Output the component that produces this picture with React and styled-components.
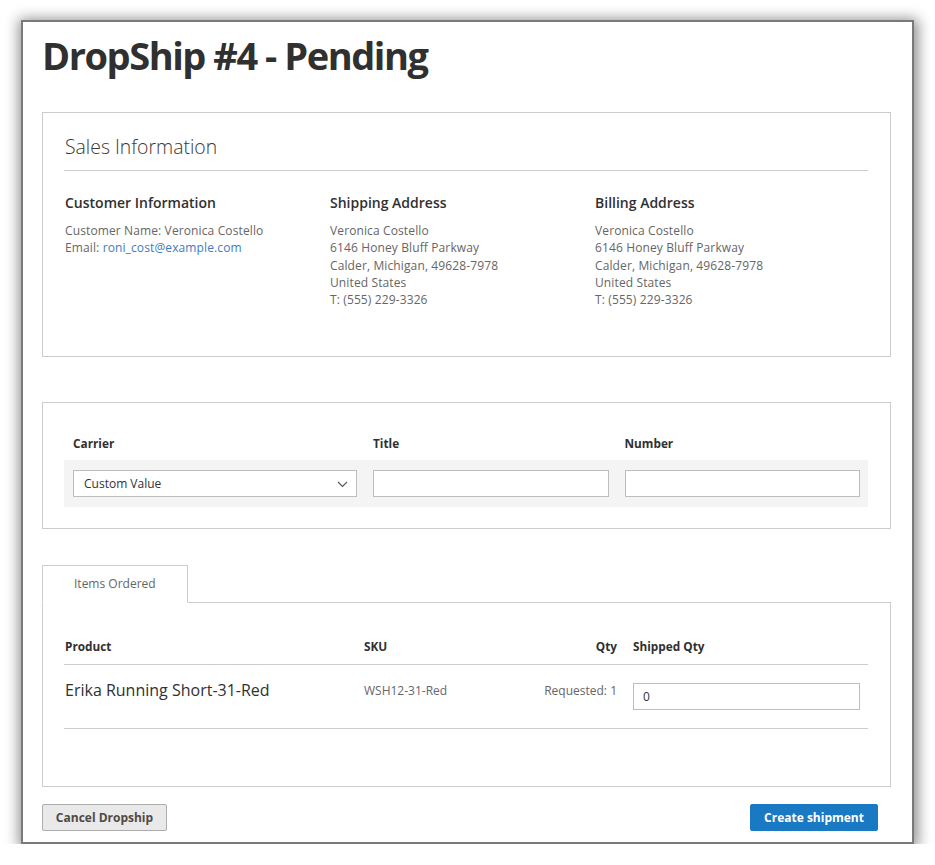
import React from "react";
import styled, { createGlobalStyle } from "styled-components";

const Global = createGlobalStyle`
  html, body { margin: 0; padding: 0; background: #ffffff; }
  body { font-family: "Open Sans", "Liberation Sans", sans-serif; color: #303030; }
  * { box-sizing: border-box; }
`;

const Stage = styled.div`
  padding: 20px 0 0 21px;
`;

const Frame = styled.div`
  width: 893px;
  height: 824px;
  background: #fff;
  border: 2px solid #7a7a7a;
  box-shadow: 1px 2px 13px 3px rgba(0, 0, 0, 0.45);
  padding: 11px 21px 11px 19px;
  display: flex;
  flex-direction: column;
`;

const Title = styled.h1`
  margin: 0 0 33.5px 0;
  font-size: 38px;
  line-height: 45.6px;
  font-weight: 700;
  letter-spacing: -1.45px;
  color: #303030;
`;

const Box = styled.section`
  border: 1px solid #cccccc;
  padding: ${(p) => p.$pad};
  margin-bottom: ${(p) => p.$mb || "0"};
`;

const SectionTitle = styled.h2`
  margin: 0;
  font-size: 19.4px;
  line-height: 28px;
  font-weight: 300;
  color: #41362f;
  padding: 0 0 9px 1px;
  border-bottom: 1px solid #cccccc;
`;

const Columns = styled.div`
  display: grid;
  grid-template-columns: repeat(3, 265px);
  margin-top: 22px;
`;

const ColHead = styled.h3`
  margin: 0 0 9px 1px;
  font-size: 14px;
  line-height: 20px;
  font-weight: 600;
  color: #303030;
`;

const Lines = styled.div`
  font-size: 12px;
  line-height: 17.3px;
  letter-spacing: 0.12px;
  color: #666666;
  padding-left: 1px;
`;

const Link = styled.a`
  color: #3d7bc6;
  text-decoration: none;
`;

const TrackGrid = styled.div`
  display: grid;
  grid-template-columns: 284px 1fr 1fr;
  column-gap: 16px;
  padding: ${(p) => p.$pad};
  background: ${(p) => (p.$band ? "#f4f4f4" : "transparent")};
`;

const FieldLabel = styled.div`
  font-size: 11.8px;
  line-height: 16px;
  font-weight: 700;
  color: #303030;
`;

const Field = styled.div`
  position: relative;
  height: 27px;
  border: 1px solid #bdbdbd;
  background: #fff;
  font-size: 12px;
  line-height: 25px;
  color: #333;
  padding-left: 10px;
`;

const Chevron = styled.svg`
  position: absolute;
  right: 8px;
  top: 10px;
`;

const TabRow = styled.div`
  display: flex;
`;

const Tab = styled.div`
  width: 146px;
  height: 38px;
  border: 1px solid #cccccc;
  border-bottom: 1px solid #fff;
  margin-bottom: -1px;
  background: #fff;
  font-size: 12px;
  line-height: 36px;
  color: #666;
  padding-left: 31px;
  position: relative;
  z-index: 1;
`;

const Panel = styled.div`
  border: 1px solid #cccccc;
  padding: 35px 22px 57px 21px;
`;

const Row = styled.div`
  display: grid;
  grid-template-columns: 300px 1fr 110px 235px;
  align-items: start;
  border-bottom: 1px solid #cccccc;
  padding: ${(p) => p.$pad};
`;

const HeadCell = styled.div`
  font-size: 11.8px;
  line-height: 16px;
  font-weight: 700;
  color: #303030;
  padding-left: ${(p) => p.$pl || "0"};
  padding-right: ${(p) => p.$pr || "0"};
  text-align: ${(p) => p.$align || "left"};
`;

const ProductName = styled.div`
  font-size: 16px;
  line-height: 22px;
  color: #303030;
  padding-left: 1px;
`;

const SmallCell = styled.div`
  font-size: 12px;
  line-height: 17px;
  color: #666;
  margin-top: 3.5px;
  text-align: ${(p) => p.$align || "left"};
  padding-right: ${(p) => p.$pr || "0"};
`;

const QtyInput = styled.div`
  margin-top: 4px;
  width: 227px;
  height: 27px;
  border: 1px solid #bdbdbd;
  font-size: 12px;
  line-height: 25px;
  color: #333;
  padding-left: 9px;
`;

const Actions = styled.div`
  display: flex;
  justify-content: space-between;
  margin-top: 17px;
  padding-right: 13px;
`;

const Button = styled.button`
  height: 27px;
  width: ${(p) => p.$w};
  border-radius: 2px;
  font-family: "Open Sans", "Liberation Sans", sans-serif;
  font-size: 12px;
  font-weight: 700;
  padding: 0;
  cursor: pointer;
  border: 1px solid ${(p) => (p.$primary ? "#1979c3" : "#adadad")};
  background: ${(p) => (p.$primary ? "#1979c3" : "#e9e9e9")};
  color: ${(p) => (p.$primary ? "#ffffff" : "#514943")};
`;

const addresses = [
  "Veronica Costello",
  "6146 Honey Bluff Parkway",
  "Calder, Michigan, 49628-7978",
  "United States",
  "T: (555) 229-3326",
];

function Address({ title }) {
  return (
    <div>
      <ColHead>{title}</ColHead>
      <Lines>
        {addresses.map((l) => (
          <div key={l}>{l}</div>
        ))}
      </Lines>
    </div>
  );
}

export default function App() {
  return (
    <>
      <Global />
      <Stage>
        <Frame>
          <Title>DropShip #4 - Pending</Title>

          <Box $pad="20px 22px 47px 21px" $mb="45px">
            <SectionTitle>Sales Information</SectionTitle>
            <Columns>
              <div>
                <ColHead>Customer Information</ColHead>
                <Lines>
                  <div>Customer Name: Veronica Costello</div>
                  <div>
                    Email: <Link href="#">roni_cost@example.com</Link>
                  </div>
                </Lines>
              </div>
              <Address title="Shipping Address" />
              <Address title="Billing Address" />
            </Columns>
          </Box>

          <Box $pad="32px 22px 21px 21px" $mb="36px">
            <TrackGrid $pad="0 8px 9px 9px">
              <FieldLabel>Carrier</FieldLabel>
              <FieldLabel>Title</FieldLabel>
              <FieldLabel>Number</FieldLabel>
            </TrackGrid>
            <TrackGrid $band $pad="10px 8px 10px 9px">
              <Field>
                Custom Value
                <Chevron width="11" height="7" viewBox="0 0 11 7">
                  <polyline
                    points="1,1 5.5,5.5 10,1"
                    fill="none"
                    stroke="#555"
                    strokeWidth="1.1"
                  />
                </Chevron>
              </Field>
              <Field />
              <Field />
            </TrackGrid>
          </Box>

          <TabRow>
            <Tab>Items Ordered</Tab>
          </TabRow>
          <Panel>
            <Row $pad="0 0 10px 0">
              <HeadCell $pl="1px">Product</HeadCell>
              <HeadCell>SKU</HeadCell>
              <HeadCell $align="right" $pr="16px">
                Qty
              </HeadCell>
              <HeadCell>Shipped Qty</HeadCell>
            </Row>
            <Row $pad="14px 0 18px 0">
              <ProductName>Erika Running Short-31-Red</ProductName>
              <SmallCell>WSH12-31-Red</SmallCell>
              <SmallCell $align="right" $pr="16px">
                Requested: 1
              </SmallCell>
              <QtyInput>0</QtyInput>
            </Row>
          </Panel>

          <Actions>
            <Button $w="125px">Cancel Dropship</Button>
            <Button $primary $w="128px">
              Create shipment
            </Button>
          </Actions>
        </Frame>
      </Stage>
    </>
  );
}
